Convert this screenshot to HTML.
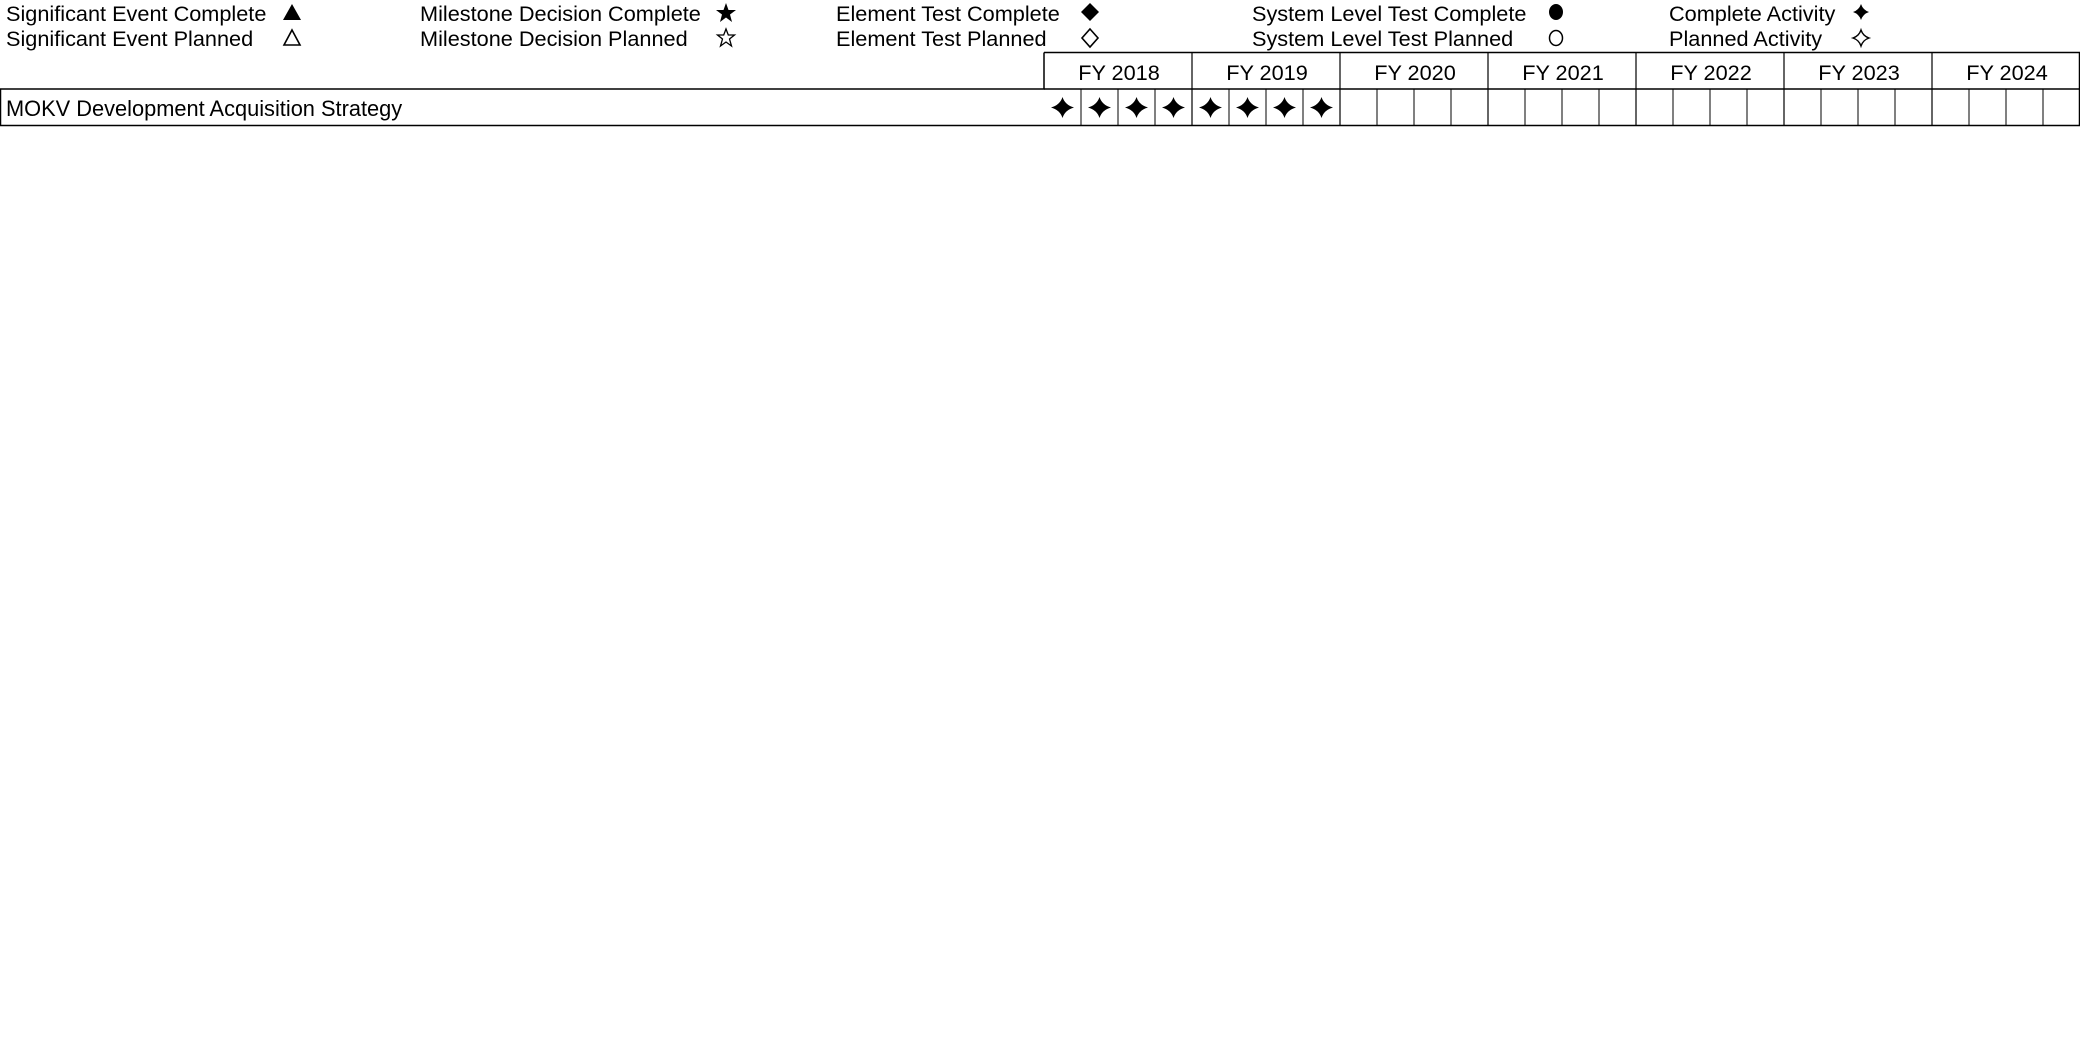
<!DOCTYPE html>
<html><head><meta charset="utf-8"><style>
body{margin:0;width:2080px;height:1050px;background:#fff;font-family:"Liberation Sans",Arial,sans-serif;color:#000;position:relative;overflow:hidden}
.t{position:absolute;font-size:21.7px;line-height:24px;white-space:nowrap}
.i{position:absolute}
</style></head><body>
<div class="t" style="left:6px;top:2px">Significant Event Complete</div>
<div class="t" style="left:6px;top:27px">Significant Event Planned</div>
<div class="t" style="left:420px;top:2px">Milestone Decision Complete</div>
<div class="t" style="left:420px;top:27px">Milestone Decision Planned</div>
<div class="t" style="left:836px;top:2px">Element Test Complete</div>
<div class="t" style="left:836px;top:27px">Element Test Planned</div>
<div class="t" style="left:1252px;top:2px">System Level Test Complete</div>
<div class="t" style="left:1252px;top:27px">System Level Test Planned</div>
<div class="t" style="left:1669px;top:2px">Complete Activity</div>
<div class="t" style="left:1669px;top:27px">Planned Activity</div>
<svg class="i" style="left:0;top:0" width="2080" height="52">
<polygon points="292,4 301,20 283,20" fill="#000"/>
<polygon points="292,30 300,45 284,45" fill="none" stroke="#000" stroke-width="1.6"/>
<polygon points="726,3 728.5,10 736,10 730,14.5 732,22 726,17.5 720,22 722,14.5 716,10 723.5,10" fill="#000"/>
<polygon points="726,29 728.3,35 734.5,35 729.5,39 731.5,46 726,42 720.5,46 722.5,39 717.5,35 723.7,35" fill="none" stroke="#000" stroke-width="1.3"/>
<polygon points="1090,3 1099,12 1090,21 1081,12" fill="#000"/>
<polygon points="1090,29 1098,38 1090,47 1082,38" fill="none" stroke="#000" stroke-width="1.6"/>
<ellipse cx="1556" cy="12" rx="7" ry="8" fill="#000"/>
<ellipse cx="1556" cy="38" rx="6.5" ry="7.5" fill="none" stroke="#000" stroke-width="1.5"/>
<path d="M1861 4 Q1863 10 1869 12 Q1863 14 1861 20 Q1859 14 1853 12 Q1859 10 1861 4Z" fill="#000"/>
<path d="M1861 30 Q1863 36 1869 38 Q1863 40 1861 46 Q1859 40 1853 38 Q1859 36 1861 30Z" fill="none" stroke="#000" stroke-width="1.4"/>
</svg>
<svg class="i" style="left:0;top:0" width="2080" height="130">
<g stroke="#000" stroke-width="1.5" fill="none">
<path d="M1044 52.5H2079.5V125.5H0.5V89H1044V52.5"/>
<path d="M1044 89H2080"/>
</g>
<g stroke="#000" stroke-width="1.2">
<line x1="1192" y1="52" x2="1192" y2="126"/><line x1="1340" y1="52" x2="1340" y2="126"/><line x1="1488" y1="52" x2="1488" y2="126"/><line x1="1636" y1="52" x2="1636" y2="126"/><line x1="1784" y1="52" x2="1784" y2="126"/><line x1="1932" y1="52" x2="1932" y2="126"/>
</g>
<g stroke="#000" stroke-width="1">
<line x1="1081" y1="89" x2="1081" y2="126"/><line x1="1118" y1="89" x2="1118" y2="126"/><line x1="1155" y1="89" x2="1155" y2="126"/>
<line x1="1229" y1="89" x2="1229" y2="126"/><line x1="1266" y1="89" x2="1266" y2="126"/><line x1="1303" y1="89" x2="1303" y2="126"/>
<line x1="1377" y1="89" x2="1377" y2="126"/><line x1="1414" y1="89" x2="1414" y2="126"/><line x1="1451" y1="89" x2="1451" y2="126"/>
<line x1="1525" y1="89" x2="1525" y2="126"/><line x1="1562" y1="89" x2="1562" y2="126"/><line x1="1599" y1="89" x2="1599" y2="126"/>
<line x1="1673" y1="89" x2="1673" y2="126"/><line x1="1710" y1="89" x2="1710" y2="126"/><line x1="1747" y1="89" x2="1747" y2="126"/>
<line x1="1821" y1="89" x2="1821" y2="126"/><line x1="1858" y1="89" x2="1858" y2="126"/><line x1="1895" y1="89" x2="1895" y2="126"/>
<line x1="1969" y1="89" x2="1969" y2="126"/><line x1="2006" y1="89" x2="2006" y2="126"/><line x1="2043" y1="89" x2="2043" y2="126"/>
</g>
<g fill="#000">
<path id="s" d="M1062.5 97 Q1065 105 1074 107.5 Q1065 110 1062.5 118 Q1060 110 1051 107.5 Q1060 105 1062.5 97Z"/>
<use href="#s" x="37"/><use href="#s" x="74"/><use href="#s" x="111"/><use href="#s" x="148"/><use href="#s" x="185"/><use href="#s" x="222"/><use href="#s" x="259"/>
</g>
<g font-family="Liberation Sans,Arial,sans-serif" font-size="21.7" text-anchor="middle">
<text x="1119" y="80">FY 2018</text><text x="1267" y="80">FY 2019</text><text x="1415" y="80">FY 2020</text><text x="1563" y="80">FY 2021</text><text x="1711" y="80">FY 2022</text><text x="1859" y="80">FY 2023</text><text x="2007" y="80">FY 2024</text>
<text x="6" y="116" text-anchor="start" font-size="21.8">MOKV Development Acquisition Strategy</text>
</g>
</svg>
</body></html>
